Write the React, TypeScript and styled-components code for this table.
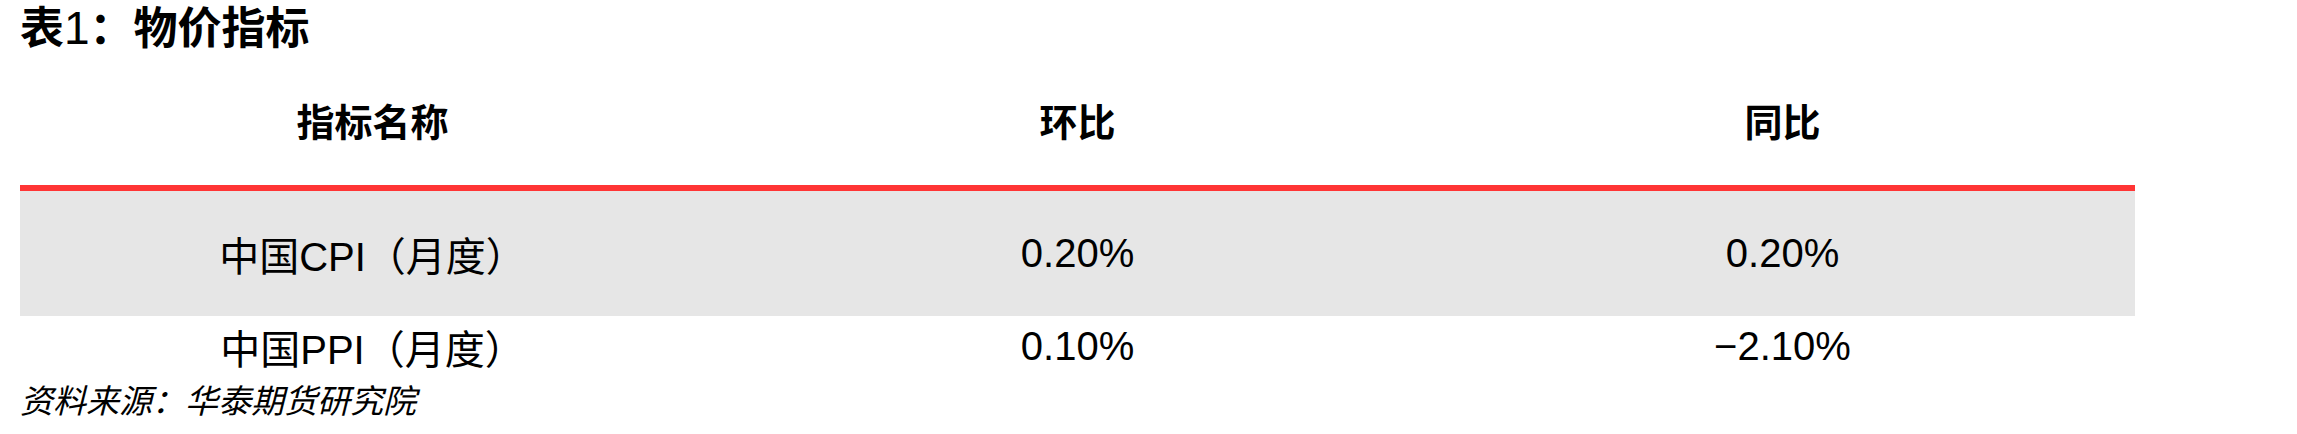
import React from "react";
import styled, { createGlobalStyle } from "styled-components";

const GlobalStyle = createGlobalStyle`
  html, body {
    margin: 0;
    padding: 0;
    background: #ffffff;
  }
  body {
    font-family: "Liberation Sans", "Noto Sans CJK SC", sans-serif;
    color: #000000;
  }
`;

const Page = styled.div`
  width: 2115px;
  padding-left: 20px;
`;

const Title = styled.h1`
  margin: 0;
  height: 50px;
  line-height: 50px;
  font-size: 44px;
  font-weight: 700;
  font-family: "Noto Sans CJK SC", sans-serif;
  white-space: nowrap;
`;

const TitleNum = styled.span`
  font-family: "Liberation Sans", sans-serif;
  font-weight: 400;
  font-size: 46px;
  line-height: 1;
`;

const Table = styled.div`
  display: flex;
  flex-direction: column;
  width: 2115px;
`;

const HeaderRow = styled.div`
  display: grid;
  grid-template-columns: repeat(3, 1fr);
  height: 131px;
  padding-top: 4px;
  border-bottom: 6px solid #ff3535;
`;

const HeaderCell = styled.div`
  display: flex;
  align-items: center;
  justify-content: center;
  font-family: "Noto Sans CJK SC", sans-serif;
  font-size: 38px;
  font-weight: 700;
`;

const Row = styled.div<{ $shaded?: boolean; $height: number }>`
  display: grid;
  grid-template-columns: repeat(3, 1fr);
  height: ${(p) => p.$height}px;
  background: ${(p) => (p.$shaded ? "#e6e6e6" : "transparent")};
`;

const Cell = styled.div`
  display: flex;
  align-items: center;
  justify-content: center;
  font-size: 40px;
  font-weight: 400;
  white-space: nowrap;
`;

const Source = styled.p`
  margin: 0;
  line-height: 44px;
  font-family: "Noto Sans CJK SC", sans-serif;
  font-size: 33px;
  font-style: italic;
  white-space: nowrap;
`;

const rows = [
  { name: "中国CPI（月度）", mom: "0.20%", yoy: "0.20%", shaded: true, height: 125 },
  { name: "中国PPI（月度）", mom: "0.10%", yoy: "−2.10%", shaded: false, height: 61 },
];

export default function App() {
  return (
    <>
      <GlobalStyle />
      <Page>
        <Title>
          表<TitleNum>1</TitleNum>：物价指标
        </Title>
        <Table>
          <HeaderRow>
            <HeaderCell>指标名称</HeaderCell>
            <HeaderCell>环比</HeaderCell>
            <HeaderCell>同比</HeaderCell>
          </HeaderRow>
          {rows.map((r) => (
            <Row key={r.name} $shaded={r.shaded} $height={r.height}>
              <Cell>{r.name}</Cell>
              <Cell>{r.mom}</Cell>
              <Cell>{r.yoy}</Cell>
            </Row>
          ))}
        </Table>
        <Source>资料来源：华泰期货研究院</Source>
      </Page>
    </>
  );
}
